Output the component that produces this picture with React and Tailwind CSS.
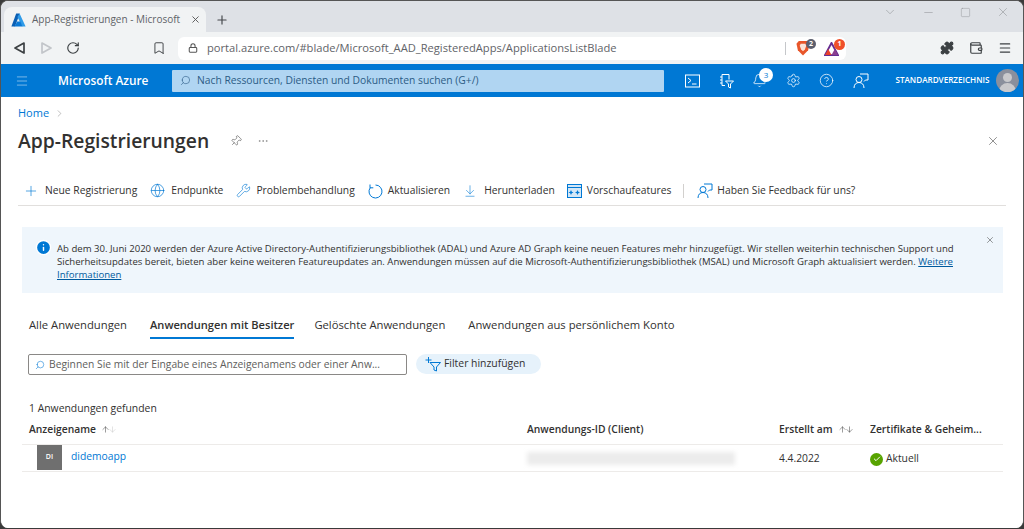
import React from "react";
import {
  X, Plus, Minus, Square, ChevronDown, RotateCw, Bookmark, Lock, Puzzle, Wallet,
  Menu, Search, Bell, Settings, CircleHelp, Globe, Wrench, ArrowDownToLine,
  Pin, Ellipsis, ChevronRight, ArrowUp, ArrowDown, Check, Info,
} from "lucide-react";

const AzureLogo = () => (
  <svg width="15" height="14" viewBox="0 0 15 14">
    <path d="M5.2 0.5h3.6L4 13.5H0.4z" fill="#0a5fb4" />
    <path d="M8.6 0.5l6 13h-3.6L8 7l-1.6-3z" fill="#2f9be8" />
    <path d="M6.2 8.6h3.2l2 4.9H3.4z" fill="#0a78d4" />
  </svg>
);

const TriangleNav = ({ flip, color }) => (
  <svg width="13" height="14" viewBox="0 0 13 14" fill="none" stroke={color} strokeWidth="1.7" strokeLinejoin="round">
    {flip ? <path d="M2 2l9 5-9 5z" /> : <path d="M11 2L2 7l9 5z" />}
  </svg>
);

const BraveIcon = () => (
  <div className="relative h-[18px] w-[22px]">
    <svg width="14" height="16" viewBox="0 0 15 17" className="absolute left-0 top-[1px]">
      <path d="M3 1h9l2.5 3-1.5 7-5.500 5.500L2 11 .5 4z" fill="#e8562a" />
      <path d="M5 4h5l1 2-1.500 4L7.500 12 5.500 10 4 6z" fill="#fbe3d8" />
    </svg>
    <div className="absolute left-[10px] top-0 flex h-[10px] w-[10px] items-center justify-center rounded-full bg-[#5c5f6e] text-[7px] font-bold text-white">2</div>
  </div>
);

const BatIcon = () => (
  <div className="relative h-[18px] w-[22px]">
    <svg width="15" height="14" viewBox="0 0 16 15" className="absolute left-0 top-[3px]">
      <path d="M8 1L1 14h14z" fill="none" stroke="#662d91" strokeWidth="2" />
      <path d="M1 14l3.500-6.500L8 14z" fill="#e8412c" />
      <path d="M15 14l-3.500-6.500L8 14z" fill="#8a3f8f" />
    </svg>
    <div className="absolute left-[10px] top-0 flex h-[11px] w-[11px] items-center justify-center rounded-full bg-[#f0502a] text-[7px] font-bold text-white">1</div>
  </div>
);

const TerminalIcon = () => (
  <svg width="15" height="14" viewBox="0 0 15 14" fill="none" stroke="#fff" strokeWidth="1">
    <rect x="0.500" y="1" width="14" height="12" />
    <path d="M3 4l3 2.500L3 9M7 10h4.500" />
  </svg>
);

const DirectoryFilterIcon = () => (
  <svg width="15" height="16" viewBox="0 0 15 16" fill="none" stroke="#fff" strokeWidth="1">
    <path d="M3 1.500h7v5M3 1.500v11h3M1 4h2M1 7h2M1 10h2" />
    <path d="M6.500 8h8l-3 3v4l-2-1v-3z" />
  </svg>
);

const FeedbackIcon = ({ color, size = 16 }) => (
  <svg width={size} height={size} viewBox="0 0 16 16" fill="none" stroke={color} strokeWidth="1">
    <circle cx="6" cy="6.500" r="3" />
    <path d="M1 15c0-3.500 2-5.500 5-5.500s5 2 5 5.500" />
    <path d="M7 1h8v6h-2.500l-1.500 1.500" />
  </svg>
);

const RefreshIcon = () => (
  <svg width="15" height="16" viewBox="0 0 15 16" fill="none" stroke="#0078d4" strokeWidth="1">
    <path d="M7.500 2a6.500 6.500 0 1 1-5.200 2.600" />
    <path d="M2 1.500v3.300h3.300" />
  </svg>
);

const PreviewIcon = () => (
  <svg width="15" height="14" viewBox="0 0 15 14" fill="none" stroke="#0078d4" strokeWidth="1">
    <rect x="0.500" y="0.500" width="14" height="13" fill="#d4e7f6" />
    <path d="M0.500 3.500h14" />
    <path d="M4 6l.8 1.800L6.500 8.500 4.800 9.200 4 11 3.200 9.200 1.500 8.500 3.200 7.800z" fill="#0078d4" stroke="none" />
    <path d="M10.500 6l.8 1.800 1.700.7-1.700.7-.8 1.800-.8-1.800L8 8.500l1.700-.7z" fill="#0078d4" stroke="none" />
  </svg>
);

const FilterAddIcon = () => (
  <svg width="16" height="15" viewBox="0 0 16 15" fill="none" stroke="#0078d4" strokeWidth="1">
    <path d="M3.500 0v6M0.500 3h6" />
    <path d="M5 5.500h10.500l-4 4.500v4l-2.500-1v-3z" />
  </svg>
);

const toolbarItems = [
  { label: "Neue Registrierung", icon: <Plus size={16} strokeWidth={1} color="#0078d4" />, cls: "gap-[6px] mr-[13px]" },
  { label: "Endpunkte", icon: <Globe size={15} strokeWidth={1.1} color="#0078d4" />, cls: "gap-[6px] mr-[13px]" },
  { label: "Problembehandlung", icon: <Wrench size={15} strokeWidth={1} color="#0078d4" />, cls: "gap-[5px] mr-[13px]" },
  { label: "Aktualisieren", icon: <RefreshIcon />, cls: "gap-[5px] mr-[13px]" },
  { label: "Herunterladen", icon: <ArrowDownToLine size={14} strokeWidth={1} color="#0078d4" />, cls: "gap-[7px] mr-[12px]" },
  { label: "Vorschaufeatures", icon: <PreviewIcon />, cls: "gap-[5px] mr-[12px]" },
];

const SortIcons = ({ dim }) => (
  <span className="ml-[5px] flex items-center">
    <ArrowUp size={9} strokeWidth={1.3} color="#333" className="-mr-[2px]" />
    <ArrowDown size={9} strokeWidth={1.3} color={dim ? "#c4c4c4" : "#333"} />
  </span>
);

export default function App() {
  return (
    <div className="h-[529px] w-[1024px] overflow-hidden bg-[#3a3a3a] text-[#323130]" style={{ fontFamily: '"Open Sans", "Noto Sans", sans-serif' }}>
      <div className="flex h-[528px] flex-col overflow-hidden rounded-[8px] border-x border-t border-[#555] bg-white">
        {/* tab strip */}
        <div className="flex h-[31px] shrink-0 items-end bg-[#dee1e6] pl-[3px]">
          <div className="flex h-[25px] w-[202px] items-center rounded-t-[8px] bg-[#f1f3f4] pl-[7px] pr-[5px]">
            <AzureLogo />
            <span className="ml-[6px] whitespace-nowrap text-[10px] text-[#5f6368]">App-Registrierungen - Microsoft</span>
            <X size={11} strokeWidth={2} color="#555" className="ml-auto" />
          </div>
          <div className="mb-[5px] ml-[9px]">
            <Plus size={14} strokeWidth={2} color="#44474a" />
          </div>
          <div className="mb-[13px] ml-auto flex items-center gap-[25px] pr-[13px] text-[#8f9296]">
            <ChevronDown size={14} strokeWidth={1} />
            <Minus size={13} strokeWidth={1} />
            <Square size={11} strokeWidth={1} />
            <X size={14} strokeWidth={1} />
          </div>
        </div>

        {/* browser toolbar */}
        <div className="flex h-[32px] shrink-0 items-center bg-[#f1f3f4] pl-[12px]">
          <TriangleNav color="#3c4043" />
          <div className="ml-[14px]"><TriangleNav flip color="#c2c5c9" /></div>
          <div className="ml-[13px]"><RotateCw size={14} strokeWidth={2} color="#3c4043" /></div>
          <div className="ml-[72px]"><Bookmark size={14} strokeWidth={1.6} color="#3c4043" /></div>
          <div className="ml-[12px] flex h-[23px] w-[668px] items-center rounded-[6px] bg-white pl-[10px]">
            <Lock size={10} strokeWidth={2.500} color="#555" />
            <span className="ml-[9px] whitespace-nowrap text-[11.15px] text-[#5f6368]">portal.azure.com/#blade/Microsoft_AAD_RegisteredApps/ApplicationsListBlade</span>
            <div className="ml-auto h-[13px] w-px bg-[#c5c7ca]" />
            <div className="ml-[10px]"><BraveIcon /></div>
            <div className="ml-[6px]"><BatIcon /></div>
          </div>
          <div className="ml-[94px] flex items-center gap-[15px]">
            <Puzzle size={14} fill="#3c4043" color="#3c4043" />
            <Wallet size={14} strokeWidth={2} color="#3c4043" />
            <Menu size={14} strokeWidth={2} color="#3c4043" />
          </div>
        </div>

        {/* azure header */}
        <div className="flex h-[33px] shrink-0 items-center bg-[#0078d4] pl-[14px] text-white">
          <Menu size={14} strokeWidth={1} color="#cfe6f7" />
          <span className="ml-[29px] w-[91px] whitespace-nowrap text-[11.85px] font-semibold">Microsoft Azure</span>
          <div className="ml-[23px] flex h-[22px] w-[492px] items-center rounded-[1px] bg-[#b0d5f2] pl-[8px] text-[#2c5c85]">
            <Search size={11} strokeWidth={1.3} className="-scale-x-100" />
            <span className="ml-[6px] whitespace-nowrap text-[10.3px]">Nach Ressourcen, Diensten und Dokumenten suchen (G+/)</span>
          </div>
          <div className="ml-[21px] flex items-center gap-[18.5px]">
            <TerminalIcon />
            <DirectoryFilterIcon />
            <div className="relative">
              <Bell size={15} strokeWidth={1.2} />
              <div className="absolute -right-[6px] -top-[5px] flex h-[14px] w-[14px] items-center justify-center rounded-full bg-white text-[8px] text-[#0078d4]">3</div>
            </div>
            <Settings size={15} strokeWidth={1.2} />
            <CircleHelp size={15} strokeWidth={1.2} />
            <FeedbackIcon color="#fff" />
          </div>
          <span className="ml-[27px] w-[94px] whitespace-nowrap text-[8.1px] font-semibold">STANDARDVERZEICHNIS</span>
          <div className="relative ml-[6px] h-[23px] w-[23px] overflow-hidden rounded-full bg-[#8a8f9c]">
            <div className="mx-auto mt-[4px] h-[9px] w-[9px] rounded-full bg-[#c9c9cc]" />
            <div className="mx-auto mt-[1px] h-[12px] w-[17px] rounded-t-full bg-[#c9c9cc]" />
          </div>
        </div>

        {/* portal content */}
        <div className="flex flex-1 flex-col bg-white pl-[17px] pr-[17px]">
          <div className="flex h-[32px] items-center text-[11px] text-[#0078d4]">
            Home
            <ChevronRight size={11} strokeWidth={1} color="#777" className="ml-[5px]" />
          </div>
          <div className="flex h-[24px] items-center">
            <h1 className="whitespace-nowrap text-[19.3px] font-semibold text-[#323130]">App-Registrierungen</h1>
            <Pin size={12} strokeWidth={1} color="#333" className="ml-[21px] rotate-45" />
            <Ellipsis size={12} strokeWidth={1} color="#666" className="ml-[15px]" />
            <X size={14} strokeWidth={1} color="#444" className="ml-auto mr-[6px]" />
          </div>

          <div className="mt-[23px] flex h-[30px] items-center border-b border-[#e1dfdd] pl-[5px] text-[10.3px]">
            {toolbarItems.map((item) => (
              <div key={item.label} className={"flex items-center whitespace-nowrap " + item.cls}>
                {item.icon}
                {item.label}
              </div>
            ))}
            <div className="h-[14px] w-px bg-[#d2d0ce]" />
            <div className="ml-[13px] flex items-center gap-[4px] whitespace-nowrap">
              <FeedbackIcon color="#0078d4" />
              Haben Sie Feedback für uns?
            </div>
          </div>

          <div className="ml-[4px] mr-[3px] mt-[21px] flex h-[66px] bg-[#eff6fc] pl-[13px] pr-[8px] pt-[15px]">
            <Info size={17} fill="#0078d4" color="#fff" strokeWidth={2} className="-mt-[3px] shrink-0" />
            <p className="ml-[5px] w-[905px] text-[9.58px] leading-[13px]">
              Ab dem 30. Juni 2020 werden der Azure Active Directory-Authentifizierungsbibliothek (ADAL) und Azure AD Graph keine neuen Features mehr hinzugefügt. Wir stellen weiterhin technischen Support und Sicherheitsupdates bereit, bieten aber keine weiteren Featureupdates an. Anwendungen müssen auf die Microsoft-Authentifizierungsbibliothek (MSAL) und Microsoft Graph aktualisiert werden.{" "}
              <span className="text-[#005a9e] underline">Weitere</span>{" "}
              <span className="text-[#005a9e] underline">Informationen</span>
            </p>
            <X size={10} strokeWidth={1.3} color="#444" className="-mt-[7px] ml-auto shrink-0" />
          </div>

          <div className="ml-[11px] mt-[23px] flex h-[23px] items-start text-[11.25px]">
            <span className="mr-[23px] pt-[1px]">Alle Anwendungen</span>
            <span className="mr-[20px] border-b-2 border-[#0078d4] pb-[3px] pt-[1px] text-[11.1px] font-semibold">Anwendungen mit Besitzer</span>
            <span className="mr-[23px] pt-[1px]">Gelöschte Anwendungen</span>
            <span className="pt-[1px]">Anwendungen aus persönlichem Konto</span>
          </div>

          <div className="ml-[10px] mt-[15px] flex items-start">
            <div className="flex h-[21px] w-[379px] items-center rounded-[2px] border border-[#8a8886] pl-[6px] text-[10.3px] text-[#605e5c]">
              <Search size={10} strokeWidth={1.3} color="#0078d4" className="-scale-x-100" />
              <span className="ml-[4px] whitespace-nowrap">Beginnen Sie mit der Eingabe eines Anzeigenamens oder einer Anw...</span>
            </div>
            <div className="ml-[9px] flex h-[20px] w-[125px] items-center rounded-full bg-[#e6f2fb] pl-[9px] text-[10.4px]">
              <FilterAddIcon />
              <span className="ml-[3px] whitespace-nowrap">Filter hinzufügen</span>
            </div>
          </div>

          <div className="ml-[11px] mt-[26px] text-[10.4px] leading-[14px]">1 Anwendungen gefunden</div>

          <div className="ml-[4px] mr-[3px] mt-[6px] text-[10.3px]">
            <div className="flex h-[24px] items-center border-b border-[#edebe9] pb-[6px] font-semibold">
              <div className="flex w-[505px] items-center pl-[7px]">Anzeigename<SortIcons dim /></div>
              <div className="w-[252px]">Anwendungs-ID (Client)</div>
              <div className="flex w-[91px] items-center">Erstellt am<SortIcons /></div>
              <div className="whitespace-nowrap">Zertifikate &amp; Geheim...</div>
            </div>
            <div className="flex h-[27px] items-center border-b border-[#edebe9]">
              <div className="flex w-[505px] items-start self-start pl-[15px]">
                <div className="flex h-[25px] w-[25px] items-center justify-center bg-[#6f6f6f] text-[7px] font-semibold text-white">DI</div>
                <span className="ml-[9px] mt-[4px] text-[#0078d4]">didemoapp</span>
              </div>
              <div className="w-[252px]">
                <div className="h-[13px] w-[208px] bg-[#ececec] blur-[2px]" />
              </div>
              <div className="w-[91px] pt-[2px]">4.4.2022</div>
              <div className="flex items-center pt-[2px]">
                <div className="flex h-[13px] w-[13px] items-center justify-center rounded-full bg-[#57a300]">
                  <Check size={8} strokeWidth={3} color="#fff" />
                </div>
                <span className="ml-[3px]">Aktuell</span>
              </div>
            </div>
          </div>
        </div>
      </div>
    </div>
  );
}
